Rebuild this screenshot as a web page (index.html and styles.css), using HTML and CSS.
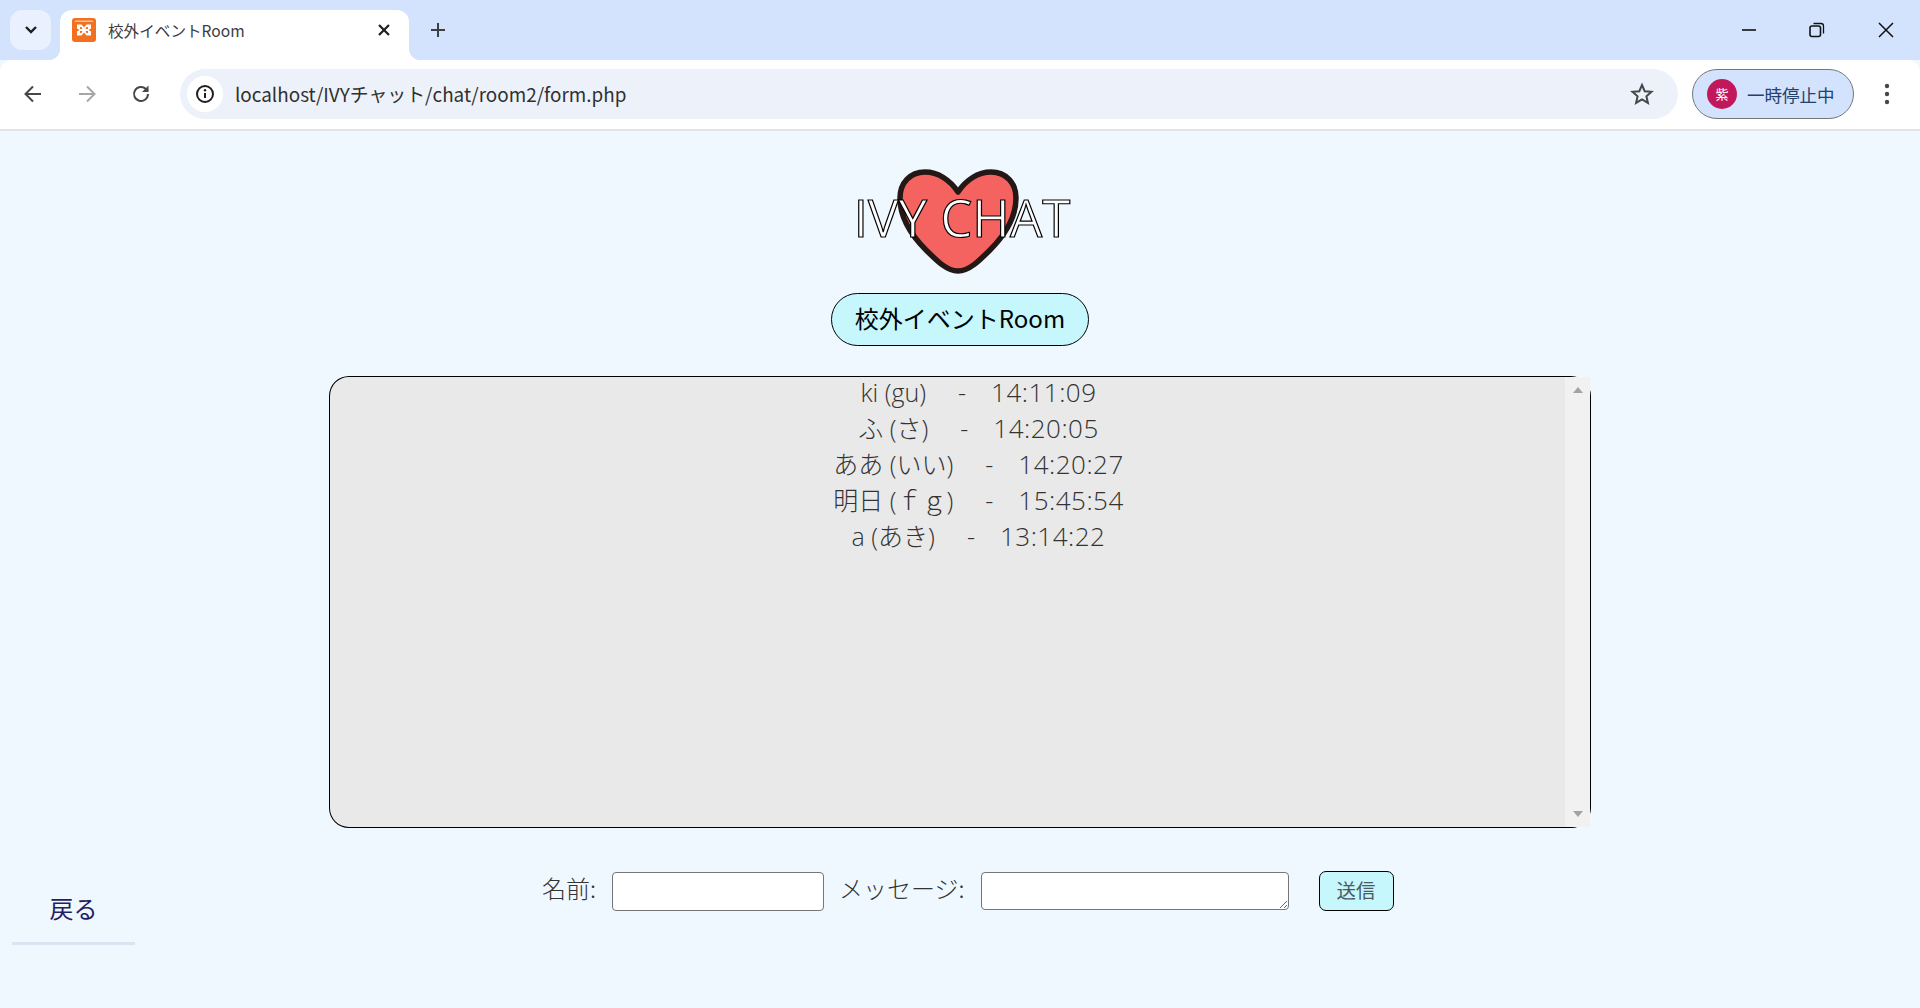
FILE: index.html
```html
<!DOCTYPE html>
<html lang="ja">
<head>
<meta charset="utf-8">
<title>校外イベントRoom</title>
<link rel="stylesheet" href="styles.css">
</head>
<body>
<header class="browser">
  <div class="tabstrip">
    <button class="tab-search" type="button" aria-label="タブを検索">
      <svg width="14" height="10" viewBox="0 0 14 10"><path d="M2 2l5 5 5-5" fill="none" stroke="#1f1f1f" stroke-width="2.4"/></svg>
    </button>
    <div class="tab">
      <svg class="favicon" width="24" height="24" viewBox="0 0 24 24">
        <rect width="24" height="24" rx="3" fill="#f37021"/>
        <rect x="3" y="2.5" width="18" height="1.4" fill="#fbc9a6"/>
        <path d="M5 6.500h4.500l2.500 3 2.500-3H19v4l-2.500 1.500 2.500 1.500v4h-4.500l-2.500-3-2.500 3H5v-4l2.500-1.500L5 10.500z" fill="#fff"/>
        <path d="M8 9h1.500l1 2H8zM14.500 9H16v2h-2.500zM8 13h2.500l-1 2H8zM13.500 13H16v2h-1.500z" fill="#f37021"/>
      </svg>
      <span class="tab-title">校外イベントRoom</span>
      <svg class="tab-close" width="14" height="14" viewBox="0 0 14 14"><path d="M2 2l10 10M12 2L2 12" stroke="#1f1f1f" stroke-width="2.2"/></svg>
    </div>
    <svg class="new-tab" width="18" height="18" viewBox="0 0 18 18"><path d="M9 2v14M2 9h14" stroke="#3c4043" stroke-width="2"/></svg>
    <div class="window-controls">
      <svg width="16" height="16" viewBox="0 0 16 16"><path d="M1 8h14" stroke="#111" stroke-width="1.6"/></svg>
      <svg width="16" height="16" viewBox="0 0 16 16"><rect x="1" y="4" width="10.500" height="10.500" rx="2" fill="none" stroke="#111" stroke-width="1.6"/><path d="M4.500 1.500h7.500a2.500 2.500 0 0 1 2.500 2.500v7.500" fill="none" stroke="#111" stroke-width="1.3"/></svg>
      <svg width="16" height="16" viewBox="0 0 16 16"><path d="M1 1l14 14M15 1L1 15" stroke="#111" stroke-width="1.5"/></svg>
    </div>
  </div>
  <div class="toolbar">
    <svg class="nav-icon" width="22" height="22" viewBox="0 0 22 22"><path d="M19 11H4M11 3.500L3.500 11l7.500 7.500" fill="none" stroke="#474747" stroke-width="2"/></svg>
    <svg class="nav-icon" width="22" height="22" viewBox="0 0 22 22"><path d="M3 11h15M11 3.500l7.500 7.500-7.500 7.500" fill="none" stroke="#a6a6a6" stroke-width="2"/></svg>
    <svg class="nav-icon" width="22" height="22" viewBox="0 0 22 22"><path d="M18 11a7 7 0 1 1-2.100-5L18 8" fill="none" stroke="#474747" stroke-width="2"/><path d="M18.500 2.500v6.500H12z" fill="#474747"/></svg>
    <div class="address">
      <span class="site-info">
        <svg width="20" height="20" viewBox="0 0 20 20"><circle cx="10" cy="10" r="8" fill="none" stroke="#1f1f1f" stroke-width="2"/><path d="M10 9v5" stroke="#1f1f1f" stroke-width="2"/><circle cx="10" cy="6.300" r="1.200" fill="#1f1f1f"/></svg>
      </span>
      <span class="url">localhost/IVYチャット/chat/room2/form.php</span>
      <svg class="star" width="24" height="24" viewBox="0 0 24 24"><path d="M12 3l2.700 6.200 6.800.6-5.100 4.500 1.500 6.600-5.900-3.500-5.900 3.500 1.500-6.600-5.100-4.500 6.800-.6z" fill="none" stroke="#474747" stroke-width="2" stroke-linejoin="miter"/></svg>
    </div>
    <div class="profile">
      <span class="avatar">紫</span>
      <span class="profile-label">一時停止中</span>
    </div>
    <svg class="menu" width="6" height="22" viewBox="0 0 6 22"><circle cx="3" cy="3" r="2.200" fill="#474747"/><circle cx="3" cy="11" r="2.200" fill="#474747"/><circle cx="3" cy="19" r="2.200" fill="#474747"/></svg>
  </div>
</header>

<main class="page">
  <div class="logo">
    <svg class="heart" width="122" height="106" viewBox="0 0 122 106">
      <path d="M61 24C53 12 41 4 28 4 13 4 3 15 3 30c0 19 10 36 26 52 11 11 21 21 32 21s21-10 32-21c16-16 26-33 26-52 0-15-10-26-25-26-13 0-25 8-33 20z" fill="#f56361" stroke="#231815" stroke-width="5.500" stroke-linejoin="round"/>
    </svg>
    <h1 class="logo-text">IVY CHAT</h1>
  </div>
  <h2 class="room-name">校外イベントRoom</h2>
  <section class="chat-box">
    <div class="chat-log">
      <p><span>ki (gu)</span><span class="dash">-</span><span class="time">14:11:09</span></p>
      <p><span>ふ (さ)</span><span class="dash">-</span><span class="time">14:20:05</span></p>
      <p><span>ああ (いい)</span><span class="dash">-</span><span class="time">14:20:27</span></p>
      <p><span>明日 (ｆｇ)</span><span class="dash">-</span><span class="time">15:45:54</span></p>
      <p><span>a (あき)</span><span class="dash">-</span><span class="time">13:14:22</span></p>
    </div>
    <div class="scrollbar">
      <span class="arrow arrow-up"></span>
      <span class="arrow arrow-down"></span>
    </div>
  </section>
  <div class="bottom">
    <a class="back" href="#">戻る</a>
    <form class="send-form">
      <label class="field-label" for="name">名前:</label>
      <input class="name-input" id="name" type="text">
      <label class="field-label" for="message">メッセージ:</label>
      <textarea class="message-input" id="message"></textarea>
      <button class="send" type="button">送信</button>
    </form>
  </div>
</main>
</body>
</html>
```
FILE: styles.css
```css
* { box-sizing: border-box; }
html, body { margin: 0; height: 100%; }
body {
  background: #eff7ff;
  font-family: "Open Sans", "Noto Sans CJK JP", sans-serif;
  color: #333;
  overflow: hidden;
}
svg { display: block; flex: none; }

/* browser chrome */
.tabstrip {
  height: 60px;
  background: #d3e3fd;
  display: flex;
  align-items: flex-start;
  padding-left: 10px;
}
.tab-search {
  width: 41px;
  height: 40px;
  margin-top: 10px;
  padding: 0;
  border: 0;
  border-radius: 12px;
  background: #e9f1fe;
  display: flex;
  align-items: center;
  justify-content: center;
}
.tab {
  position: relative;
  width: 349px;
  height: 50px;
  margin: 10px 0 0 9px;
  padding: 0 18px 11px 12px;
  background: #fff;
  border-radius: 12px 12px 0 0;
  display: flex;
  align-items: center;
}
.tab::before, .tab::after {
  content: "";
  position: absolute;
  bottom: 0;
  width: 12px;
  height: 12px;
}
.tab::before { left: -12px; background: radial-gradient(circle at 0 0, #d3e3fd 12px, #fff 12.5px); }
.tab::after { right: -12px; background: radial-gradient(circle at 100% 0, #d3e3fd 12px, #fff 12.5px); }
.favicon { margin-right: 12px; }
.tab-title {
  flex: 1;
  font: 15.6px "Noto Sans CJK JP", sans-serif;
  color: #3c3c3c;
  white-space: nowrap;
}
.new-tab { margin: 21px 0 0 20px; }
.window-controls {
  margin-left: auto;
  margin-top: 22px;
  padding-right: 26px;
  display: flex;
  gap: 52px;
}
.window-controls svg:last-child { margin-left: 1px; }
.toolbar {
  height: 71px;
  padding: 10px 0 11px 22px;
  background: #fff;
  border-bottom: 2px solid #e1e3e6;
  border-radius: 12px 12px 0 0;
  display: flex;
  align-items: center;
}
.nav-icon { margin-right: 32px; }
.nav-icon:nth-child(3) { margin-right: 28px; }
.address {
  width: 1498px;
  height: 50px;
  padding: 0 24px 0 7px;
  background: #edf2fa;
  border-radius: 25px;
  display: flex;
  align-items: center;
}
.site-info {
  width: 36px;
  height: 36px;
  border-radius: 50%;
  background: #fff;
  display: flex;
  align-items: center;
  justify-content: center;
  margin-right: 12px;
}
.url {
  flex: 1;
  margin-top: -2px;
  font: 18.9px "Noto Sans CJK JP", sans-serif;
  color: #303030;
  white-space: nowrap;
}
.profile {
  width: 162px;
  height: 50px;
  margin-left: 14px;
  padding-left: 14px;
  background: #d3e3fd;
  border: 1.5px solid #74777a;
  border-radius: 25px;
  display: flex;
  align-items: center;
}
.avatar {
  width: 30px;
  height: 30px;
  border-radius: 50%;
  background: #c2185b;
  color: #fff;
  font: 13px/30px "Noto Sans CJK JP", sans-serif;
  text-align: center;
  margin-right: 10px;
}
.profile-label {
  font: 17.5px "Noto Sans CJK JP", sans-serif;
  color: #24406b;
  white-space: nowrap;
}
.menu { margin-left: 30px; }

/* page */
.page {
  display: flex;
  flex-direction: column;
  align-items: center;
  padding-top: 37px;
}
.logo {
  display: grid;
  justify-items: center;
  align-items: center;
}
.heart, .logo-text { grid-area: 1 / 1; }
.heart { margin-right: 3px; }
.logo-text {
  margin: -7px 0 0 4px;
  font: 400 51px/1 "Open Sans", sans-serif;
  color: #fff;
  -webkit-text-stroke: 1.2px #000;
  white-space: nowrap;
}
.room-name {
  width: 258px;
  height: 53px;
  margin: 19px 0 0;
  background: #c6f7fd;
  border: 1px solid #000;
  border-radius: 27px;
  font: 400 24px/47px "Noto Sans CJK JP", sans-serif;
  color: #000;
  text-align: center;
}
.chat-box {
  position: relative;
  width: 1262px;
  height: 452px;
  margin-top: 30px;
  background: #e9e9e9;
  border: 1px solid #000;
  border-width: 1px 2px 1px 1px;
  border-radius: 20px;
}
.chat-log { margin-top: -3px; padding: 0 0 0 62px; width: 1235px; }
.chat-log p {
  margin: 0;
  font-size: 25px;
  font-weight: 300;
  line-height: 36px;
  text-align: center;
  color: #333;
  white-space: nowrap;
}
.dash { margin: 0 25px 0 32px; }
.time { font-size: 26px; letter-spacing: .5px; }
.scrollbar {
  position: absolute;
  top: 0;
  bottom: 0;
  right: -1px;
  width: 25px;
  background: #f1f1f1;
  display: flex;
  flex-direction: column;
  justify-content: space-between;
  align-items: center;
  padding: 10px 0;
}
.arrow {
  width: 0;
  height: 0;
  border-left: 5.5px solid transparent;
  border-right: 5.5px solid transparent;
}
.arrow-up { border-bottom: 6px solid #a3a3a3; }
.arrow-down { border-top: 6px solid #a3a3a3; }

.bottom {
  width: 100%;
  height: 90px;
  margin-top: 43px;
  padding-left: 12px;
  display: flex;
  align-items: flex-start;
}
.back {
  width: 123px;
  height: 74px;
  padding-top: 17px;
  border-bottom: 3px solid #dde3f0;
  font: 24px/40px "Noto Sans CJK JP", sans-serif;
  color: #1f1f66;
  text-align: center;
  text-decoration: none;
}
.send-form {
  margin-left: 407px;
  display: flex;
  align-items: center;
  height: 40px;
}
.field-label {
  margin-top: -6px;
  font: 300 24px/40px "Noto Sans CJK JP", sans-serif;
  color: #333;
  white-space: nowrap;
}
.name-input, .message-input {
  margin: 0;
  background: #fff;
  border: 1px solid #767676;
  border-radius: 4px;
  outline: 0;
}
.name-input { width: 212px; height: 39px; margin: 0 15px 0 16px; }
.message-input { width: 308px; height: 38px; margin: 0 30px 0 16px; }
.send {
  width: 75px;
  height: 40px;
  padding: 0 0 4px;
  background: #c6f7fd;
  border: 1px solid #000;
  border-radius: 7px;
  font: 19.5px "Noto Sans CJK JP", sans-serif;
  color: #4a5a60;
}
```
